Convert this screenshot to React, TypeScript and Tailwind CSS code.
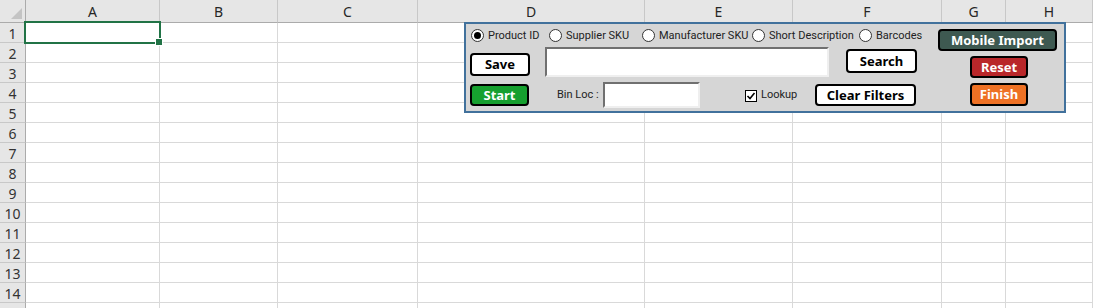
import React from "react";

const cols = ["A", "B", "C", "D", "E", "F", "G", "H"];
const rows = Array.from({ length: 15 }, (_, i) => i + 1);

function Radio({ label, checked, w }: { label: string; checked?: boolean; w: string }) {
  return (
    <div className={`flex items-center ${w}`}>
      <div className="w-[13px] h-[13px] rounded-full border border-[#333] bg-white flex items-center justify-center shrink-0">
        {checked && <div className="w-[7px] h-[7px] rounded-full bg-black" />}
      </div>
      <span className="ml-[4px] text-[11px] leading-none text-[#222] whitespace-nowrap font-['Roboto',sans-serif]">{label}</span>
    </div>
  );
}

export default function App() {
  return (
    <div className="relative w-[1093px] h-[308px] overflow-hidden bg-white font-['Noto_Sans','Open_Sans',sans-serif]">
      <div className="grid grid-cols-[26px_134px_118px_140px_227px_148px_149px_64px_1fr] grid-rows-[23px_repeat(15,20px)]">
        <div className="relative bg-[#e6e6e6] border-r border-b border-[#ababab]">
          <svg className="absolute left-0 top-0" width="26" height="23" viewBox="0 0 26 23">
            <polygon points="22,8 22,19 11,19" fill="#c4c4c4" />
          </svg>
        </div>
        {cols.map((c) => (
          <div
            key={c}
            className="bg-[#e6e6e6] border-b border-b-[#ababab] border-r border-r-[#c8c8c8] flex items-center justify-center text-[14px] text-[#262626] pt-[1px]"
          >
            {c}
          </div>
        ))}
        {rows.map((r) => (
          <React.Fragment key={r}>
            <div className="bg-[#e6e6e6] border-r border-r-[#ababab] border-b border-b-[#c8c8c8] flex items-center justify-center text-[14px] text-[#333] pt-[1px]">
              {r < 15 ? r : ""}
            </div>
            {cols.map((c) => (
              <div key={c} className="border-r border-b border-[#d9d9d9]" />
            ))}
          </React.Fragment>
        ))}
      </div>

      {/* selected cell */}
      <div className="absolute left-[24px] top-[21px] w-[137px] h-[23px] border-2 border-[#217346]" />
      <div className="absolute left-[155px] top-[38px] w-[8px] h-[8px] bg-[#217346] border border-white" />

      {/* control panel */}
      <div className="absolute left-[464px] top-[22px] w-[602px] h-[91px] bg-[#d6d6d6] border-2 border-[#41719c] flex">
        <div className="w-[472px] flex flex-col">
          <div className="flex items-center h-[13px] mt-[5px] ml-[5px]">
            <Radio label="Product ID" checked w="w-[78px]" />
            <Radio label="Supplier SKU" w="w-[93px]" />
            <Radio label="Manufacturer SKU" w="w-[110px]" />
            <Radio label="Short Description" w="w-[107px]" />
            <Radio label="Barcodes" w="w-[70px]" />
          </div>
          <div className="flex items-start mt-[5px] h-[31px]">
            <button className="ml-[4px] mt-[6px] w-[60px] h-[23px] bg-white border-2 border-black rounded-[4px] text-[13px] font-bold text-black leading-none">
              Save
            </button>
            <div className="ml-[15px] w-[284px] h-[30px] bg-white border-2 border-t-[#707070] border-l-[#707070] border-b-[#efefef] border-r-[#efefef]" />
            <button className="ml-[17px] mt-[2px] w-[71px] h-[24px] bg-white border-2 border-black rounded-[4px] text-[13px] font-bold text-black leading-none">
              Search
            </button>
          </div>
          <div className="flex items-start mt-[4px]">
            <button className="ml-[4px] mt-[2px] w-[59px] h-[22px] bg-[#16a02f] border-2 border-black rounded-[4px] text-[13px] font-bold text-white leading-none">
              Start
            </button>
            <div className="ml-[28px] w-[46px] h-[26px] flex items-center text-[11px] text-[#222] whitespace-nowrap font-['Roboto',sans-serif]">Bin Loc :</div>
            <div className="w-[97px] h-[26px] bg-white border-2 border-t-[#707070] border-l-[#707070] border-b-[#efefef] border-r-[#efefef]" />
            <div className="ml-[45px] mt-[8px] w-[12px] h-[12px] bg-white border border-black flex items-center justify-center">
              <svg width="10" height="10" viewBox="0 0 10 10">
                <path d="M1.5 5 L4 7.5 L8.5 2" fill="none" stroke="#000" strokeWidth="1.6" />
              </svg>
            </div>
            <div className="ml-[4px] w-[54px] h-[26px] flex items-center text-[11px] text-[#222] font-['Roboto',sans-serif]">Lookup</div>
            <button className="mt-[2px] w-[101px] h-[22px] bg-white border-2 border-black rounded-[4px] text-[13px] font-bold text-black leading-none">
              Clear Filters
            </button>
          </div>
        </div>
        <div className="flex flex-col">
          <button className="mt-[5px] w-[119px] h-[22px] bg-[#3e5951] border-2 border-black rounded-[4px] text-[13px] font-bold text-white leading-none">
            Mobile Import
          </button>
          <button className="ml-[32px] mt-[5px] w-[58px] h-[22px] bg-[#b9272a] border-2 border-black rounded-[4px] text-[13px] font-bold text-white leading-none">
            Reset
          </button>
          <button className="ml-[32px] mt-[5px] w-[58px] h-[23px] bg-[#ee7124] border-2 border-black rounded-[4px] text-[13px] font-bold text-white leading-none">
            Finish
          </button>
        </div>
      </div>
    </div>
  );
}
